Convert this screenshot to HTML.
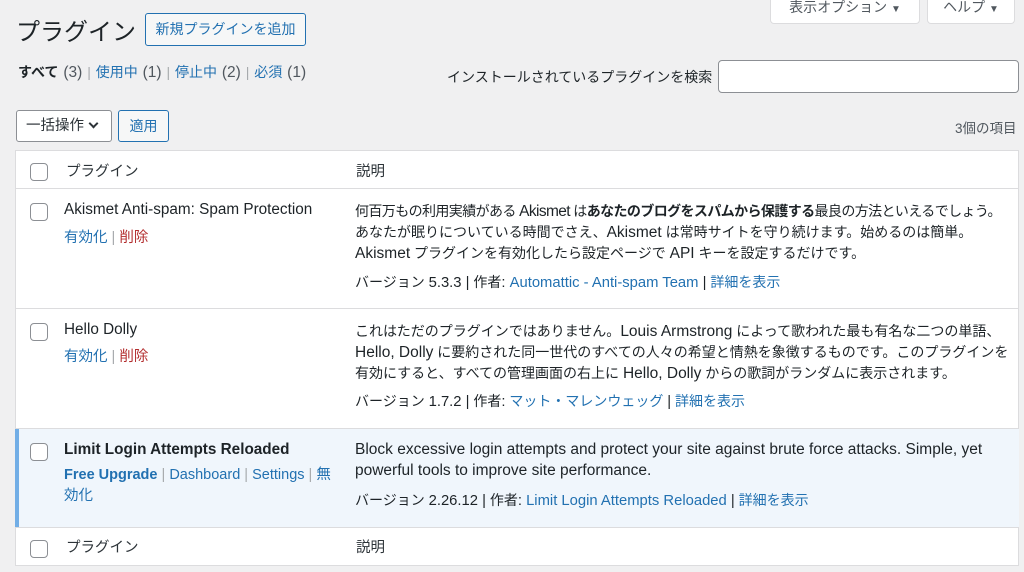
<!DOCTYPE html>
<html><head><meta charset="utf-8"><style>
*{box-sizing:border-box;margin:0;padding:0}
body{width:1024px;height:572px;overflow:hidden;background:#f0f0f1;font-family:"Liberation Sans","Noto Sans CJK JP",sans-serif;font-size:14px;color:#1d2327;position:relative}
a{color:#2271b1;text-decoration:none}
.abs{position:absolute}
.btn{position:absolute;border:1px solid #2271b1;border-radius:3px;background:#f6f7f7;color:#2271b1;font-size:14px;text-align:center}
.tab{position:absolute;background:#fff;border:1px solid #dcdcde;border-top:none;border-radius:0 0 4px 4px;color:#50575e;font-size:14px;text-align:center}
.cb{position:absolute;left:30px;width:18px;height:18px;border:1px solid #8c8f94;border-radius:4px;background:#fff}
.table{position:absolute;left:15px;top:150px;width:1004px;height:416px;background:#fff;border:1px solid #dcdcde}
.row{position:absolute;left:0;width:1002px;border-top:1px solid #dcdcde}
.t{position:absolute;left:48px;font-size:15.3px}
.d{position:absolute;left:339px;width:662px;line-height:21px;font-size:14px}
.l{font-size:15.5px}
.v{font-size:14.8px}
.gray{color:#a7aaad}
.del{color:#b32d2e}
</style></head><body>
<div class="abs" style="left:16px;top:12px;font-size:24px;color:#1d2327">プラグイン</div>
<div class="btn" style="left:145px;top:13px;width:161px;height:33px;line-height:31px">新規プラグインを追加</div>
<div class="tab" style="left:770px;top:-2px;width:150px;height:26px;line-height:18px">表示オプション <span style="font-size:10px">▼</span></div>
<div class="tab" style="left:927px;top:-2px;width:88px;height:26px;line-height:18px">ヘルプ <span style="font-size:10px">▼</span></div>
<div class="abs" style="left:18px;top:62px;font-size:14px;color:#50575e;word-spacing:1px"><b style="color:#1d2327">すべて</b> <span class="l">(3)</span> <span class="gray">|</span> <a>使用中</a> <span class="l">(1)</span> <span class="gray">|</span> <a>停止中</a> <span class="l">(2)</span> <span class="gray">|</span> <a>必須</a> <span class="l">(1)</span></div>
<div class="abs" style="left:447px;top:67px;font-size:14px">インストールされているプラグインを検索</div>
<div class="abs" style="left:718px;top:60px;width:301px;height:33px;background:#fff;border:1px solid #8c8f94;border-radius:4px"></div>
<div class="abs" style="left:16px;top:110px;width:96px;height:32px;background:#fff;border:1px solid #8c8f94;border-radius:3px;line-height:30px;padding-left:9px;color:#2c3338;font-size:14.5px">一括操作 <span style="display:inline-block;width:7px;height:7px;border-right:2px solid #2c3338;border-bottom:2px solid #2c3338;transform:rotate(45deg);margin:0 0 3px 2px"></span></div>
<div class="btn" style="left:118px;top:110px;width:51px;height:32px;line-height:30px">適用</div>
<div class="abs" style="left:955px;top:117px;font-size:13.5px;color:#50575e">3個の項目</div>
<div class="table">
 <div class="cb" style="left:14px;top:12px"></div>
 <div class="abs" style="left:50px;top:9px;color:#2c3338;font-size:14.5px">プラグイン</div>
 <div class="abs" style="left:340px;top:9px;color:#2c3338;font-size:14.5px">説明</div>
 <div class="row" style="top:37px;height:120px">
  <div class="cb" style="left:14px;top:14px"></div>
  <div class="t" style="top:12px">Akismet Anti-spam: Spam Protection</div>
  <div class="abs" style="left:48px;top:37px;font-size:14.5px"><a>有効化</a> <span class="gray">|</span> <a class="del">削除</a></div>
  <div class="d" style="top:12px;width:680px;white-space:nowrap"><span style="letter-spacing:-0.6px">何百万もの利用実績がある <span class="l">Akismet</span> は<b>あなたのブログをスパムから保護する</b>最良の方法といえるでしょう。</span><br>あなたが眠りについている時間でさえ、<span class="l">Akismet</span> は常時サイトを守り続けます。始めるのは簡単。<br><span class="l">Akismet</span> プラグインを有効化したら設定ページで <span class="l">API</span> キーを設定するだけです。</div>
  <div class="d" style="top:83px">バージョン <span class="v">5.3.3 |</span> 作者<span class="v">: <a>Automattic - Anti-spam Team</a> |</span> <a>詳細を表示</a></div>
 </div>
 <div class="row" style="top:157px;height:120px">
  <div class="cb" style="left:14px;top:14px"></div>
  <div class="t" style="top:12px">Hello Dolly</div>
  <div class="abs" style="left:48px;top:36px;font-size:14.5px"><a>有効化</a> <span class="gray">|</span> <a class="del">削除</a></div>
  <div class="d" style="top:12px">これはただのプラグインではありません。<span class="l">Louis Armstrong</span> によって歌われた最も有名な二つの単語、<span class="l">Hello, Dolly</span> に要約された同一世代のすべての人々の希望と情熱を象徴するものです。このプラグインを有効にすると、すべての管理画面の右上に <span class="l">Hello, Dolly</span> からの歌詞がランダムに表示されます。</div>
  <div class="d" style="top:82px">バージョン <span class="v">1.7.2 |</span> 作者<span class="v">:</span> <a>マット・マレンウェッグ</a> <span class="v">|</span> <a>詳細を表示</a></div>
 </div>
 <div class="row" style="top:277px;height:99px;background:#f0f6fc;box-shadow:inset 4px 0 0 #72aee6;left:-1px;width:1004px">
  <div class="cb" style="left:15px;top:14px"></div>
  <div class="t" style="top:12px;left:49px;font-weight:bold">Limit Login Attempts Reloaded</div>
  <div class="abs" style="left:49px;top:36px;width:272px;line-height:21px;font-size:14.5px"><a><b>Free Upgrade</b></a> <span class="gray">|</span> <a>Dashboard</a> <span class="gray">|</span> <a>Settings</a> <span class="gray">|</span> <a>無効化</a></div>
  <div class="d" style="top:10px;left:340px;font-size:15.5px;width:650px">Block excessive login attempts and protect your site against brute force attacks. Simple, yet powerful tools to improve site performance.</div>
  <div class="d" style="top:61px;left:340px">バージョン <span class="v">2.26.12 |</span> 作者<span class="v">: <a>Limit Login Attempts Reloaded</a> |</span> <a>詳細を表示</a></div>
 </div>
 <div class="row" style="top:376px;height:39px">
  <div class="cb" style="left:14px;top:12px"></div>
  <div class="abs" style="left:50px;top:8px;color:#2c3338;font-size:14.5px">プラグイン</div>
  <div class="abs" style="left:340px;top:8px;color:#2c3338;font-size:14.5px">説明</div>
 </div>
</div>
</body></html>
